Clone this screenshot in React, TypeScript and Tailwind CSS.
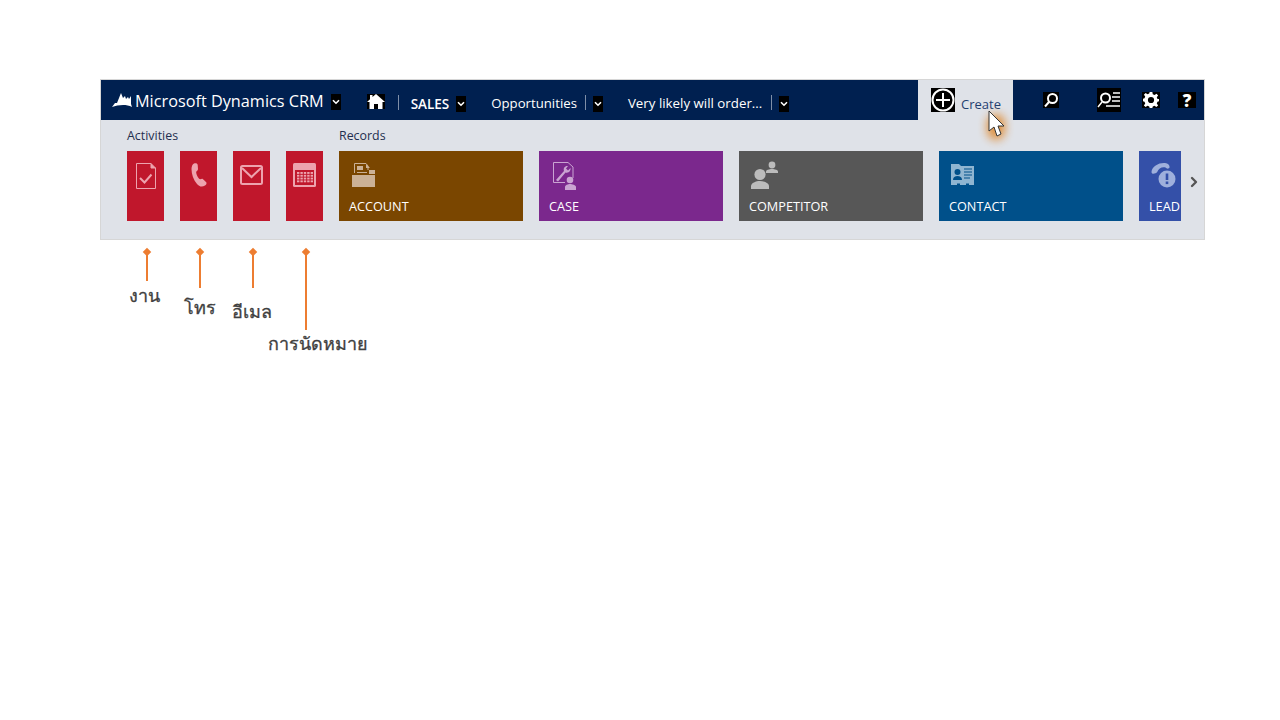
import React from 'react';
import { ChevronRight } from 'lucide-react';

const FONT = { fontFamily: '"Open Sans", "Noto Sans", sans-serif' };

function NavChevron() {
  return (
    <span className="flex h-4 w-2.5 shrink-0 items-center justify-center bg-black">
      <svg width="8" height="6" viewBox="0 0 8 6" fill="none" stroke="white" strokeWidth="1.6">
        <path d="M1 1.2 L4 4.2 L7 1.2" />
      </svg>
    </span>
  );
}

function NavSep() {
  return <span className="block h-[15px] w-px bg-[#7f8fa8]" />;
}

function TaskIcon() {
  return (
    <svg width="20" height="26" viewBox="0 0 20 26" fill="none" stroke="#eda3ae" strokeWidth="1">
      <path d="M.5.5 H15 L19.5 5 V25.5 H.5 Z" />
      <path d="M15 .5 V5 H19.5" fill="#eda3ae" />
      <path d="M4 15 L8.5 19.5 L15.5 11.5" strokeWidth="2" />
    </svg>
  );
}

function PhoneIcon() {
  return (
    <svg width="16" height="24" viewBox="0 0 16 24" fill="#eda3ae">
      <path d="M3 .5 C5 -.2 6.5 .5 6.7 2 L7 6 C7 7.5 5.5 8 5.2 9 C5 10.5 7 15 8.5 16 C9.5 16.5 10.5 15.5 11.5 15.8 L15 19 C16 20 15.5 21.5 14 22.5 C11 24.5 8 23.5 6 21 C2.5 17 .5 11.5 .5 6 C.5 3.5 1.5 1.2 3 .5 Z" />
    </svg>
  );
}

function MailIcon() {
  return (
    <svg className="mt-[2px]" width="23" height="20" viewBox="0 0 23 20" fill="none" stroke="#eda3ae">
      <rect x="1" y="1" width="21" height="18" rx="1.5" strokeWidth="2" />
      <path d="M2 3 L11.5 12 L21 3" strokeWidth="2" />
    </svg>
  );
}

function CalendarIcon() {
  const cells = [];
  for (let r = 0; r < 4; r++) {
    for (let c = 0; c < 5; c++) {
      cells.push(<rect key={`${r}-${c}`} x={4 + c * 3.4} y={9 + r * 2.8} width="2.4" height="1.9" fill="#eda3ae" />);
    }
  }
  return (
    <svg width="23" height="24" viewBox="0 0 23 24">
      <rect width="23" height="24" rx="1.5" fill="#eda3ae" />
      <rect x="2" y="7" width="19" height="15" fill="#c0172c" />
      {cells}
    </svg>
  );
}

function AccountIcon() {
  return (
    <svg className="ml-px mt-px" width="23" height="24" viewBox="0 0 23 24" fill="#cbb196">
      <path d="M2.5 10 V.5 H14 L16 3 V7" fill="none" stroke="#cbb196" />
      <path d="M5 3 H11 V7 H5 Z M5 9 H15 V10 H5 Z" />
      <path d="M14 1 L18 5 H14 Z M17 7 H23 V11 H17 Z" />
      <rect y="12" width="23" height="12" />
    </svg>
  );
}

function CaseIcon() {
  return (
    <svg className="ml-[2px]" width="24" height="28" viewBox="0 0 24 28" fill="#caa4d2">
      <path d="M.5 .5 H15 L20 5 V16 M.5 .5 V20.5 H12" fill="none" stroke="#caa4d2" />
      <path d="M3 18 L11 9 C10 6 12 3.5 15 4 L13 6.5 L15 8.5 L17.5 6 C18 9 15.5 11.5 12.5 10.5 L5 19.5 Z" />
      <circle cx="17" cy="18" r="3.3" />
      <path d="M12 28 V25 C12 23 15 22 17 22 C19 22 23 23 23 25 V28 Z" />
    </svg>
  );
}

function CompetitorIcon() {
  return (
    <svg className="-mt-px" width="27" height="28" viewBox="0 0 27 28" fill="#bcbcbc">
      <circle cx="9" cy="13.5" r="5.6" />
      <path d="M0 28 V25 C0 22 5 20 9 20 C13 20 18 22 18 25 V28 Z" />
      <circle cx="21" cy="4" r="3.4" />
      <path d="M15 12 V10.5 C15 9 18 8 21 8 C24 8 27 9 27 10.5 V12 Z" />
    </svg>
  );
}

function ContactIcon() {
  return (
    <svg className="mt-[2px]" width="23" height="21" viewBox="0 0 23 21">
      <path d="M0 0 H8 L10 2 H23 V21 H18 V19.5 H15 V21 H9 V19.5 H6 V21 H0 Z" fill="#8fb5d1" />
      <circle cx="6.5" cy="8" r="3" fill="#00508a" />
      <path d="M2 16 C2 13 4 12 6.5 12 C9 12 11 13 11 16 Z" fill="#00508a" />
      <path d="M13 5 H21 M13 8 H21 M13 11 H21 M13 14 H19" stroke="#00508a" strokeWidth="1.2" />
    </svg>
  );
}

function LeadIcon() {
  return (
    <svg className="shrink-0" width="30" height="26" viewBox="0 0 30 26">
      <path d="M.5 10 C1 4 8 .5 14 1 C17 1.3 19 3.5 18.5 5.5 C18 7 15.5 7 14.5 5.5 C11 4.5 7.5 6.5 6.2 10 C5 11.5 .5 13 .5 10 Z" fill="#9fb0dc" />
      <circle cx="16" cy="17" r="8.5" fill="#9fb0dc" />
      <rect x="14.7" y="11.5" width="2.6" height="6.5" fill="#3450a8" />
      <rect x="14.7" y="19.5" width="2.6" height="2.6" fill="#3450a8" />
    </svg>
  );
}

function RecordTile({ label, bg, icon, width = 'w-[184px]' }: { label: string; bg: string; icon: React.ReactNode; width?: string }) {
  return (
    <div className={`flex h-[70px] shrink-0 flex-col overflow-hidden ${width} ${bg}`}>
      <div className="flex h-[47px] items-start pl-[12px] pt-[11px]">{icon}</div>
      <span className="pl-[10px] text-[12.7px] leading-[17px] text-white">{label}</span>
    </div>
  );
}

function ActivityTile({ icon }: { icon: React.ReactNode }) {
  return <div className="flex h-[70px] w-[37px] items-start justify-center bg-[#c0172c] pt-[12px]">{icon}</div>;
}

function Annotation({ x, lineEnd, label, labelX, labelY }: { x: string; lineEnd: string; label: string; labelX: string; labelY: string }) {
  return (
    <>
      <span className={`absolute top-[249px] h-[6px] w-[6px] rotate-45 bg-[#ed7d31] ${x}`} />
      <span className={`absolute top-[252px] w-[2px] bg-[#ed7d31] ${lineEnd}`} />
      <span className={`absolute whitespace-nowrap text-[18px] leading-[24px] text-[#404040] [-webkit-text-stroke:0.3px_#404040] ${labelX} ${labelY}`}>{label}</span>
    </>
  );
}

export default function App() {
  return (
    <div className="relative h-[720px] w-[1280px] overflow-hidden bg-white pl-[100px] pt-[79px]" style={FONT}>
      <div className="h-[161px] w-[1105px] border border-[#d6d6d6] bg-[#dfe2e8]">
        <nav className="flex h-10 items-stretch bg-[#002050] pr-[8px] text-white">
          <div className="flex items-center pl-[11px]">
            <svg className="-mt-px" width="20" height="14" viewBox="0 0 20 14" fill="white">
              <path d="M0 14 L3 10 L5 10 L9 0 L11 5 L13 3 L14 6 L16 4 L17 6 L19 3 V11 L20 14 C14 11 6 12 0 14 Z" />
            </svg>
            <span className="ml-[3px] mt-[3px] text-[16.25px] leading-none">Microsoft Dynamics CRM</span>
            <span className="ml-[7px] mt-[4px]"><NavChevron /></span>
          </div>
          <div className="ml-[26px] flex items-center pt-[2px]">
            <span className="flex h-[15px] w-[18px] items-center justify-center bg-black">
              <svg width="18" height="15" viewBox="0 0 18 15" fill="white">
                <path d="M9 0 L18 8 H15.5 V15 H11 V10 H7 V15 H2.5 V8 H0 L3 5.3 V1 H5.5 V3 Z" />
              </svg>
            </span>
            <span className="ml-[13px] mt-[3px]"><NavSep /></span>
            <span className="ml-[12px] mt-[6px] text-[13.5px] font-semibold">SALES</span>
            <span className="ml-[7px] mt-[6px]"><NavChevron /></span>
            <span className="ml-[25px] mt-[6px] text-[13.2px]">Opportunities</span>
            <span className="ml-[8px] mt-[3px]"><NavSep /></span>
            <span className="ml-[7px] mt-[6px]"><NavChevron /></span>
            <span className="ml-[25px] mt-[6px] text-[13.3px]">Very likely will order...</span>
            <span className="ml-[9px] mt-[3px]"><NavSep /></span>
            <span className="ml-[7px] mt-[6px]"><NavChevron /></span>
          </div>
          <div className="ml-auto flex items-stretch">
            <div className="flex w-[95px] items-center gap-[6px] bg-[#dfe2e8] pl-[13px]">
              <span className="flex h-6 w-6 items-center justify-center bg-black">
                <svg width="24" height="24" viewBox="0 0 24 24" fill="none" stroke="white" strokeWidth="2">
                  <circle cx="12" cy="12" r="10.5" />
                  <path d="M12 5 V19 M5 12 H19" />
                </svg>
              </span>
              <span className="mt-[9px] text-[13px] text-[#1f3f70]">Create</span>
            </div>
            <div className="flex items-center">
              <span className="ml-[30px] flex h-4 w-4 items-center justify-center bg-black">
                <svg width="16" height="16" viewBox="0 0 16 16" fill="none" stroke="white" strokeWidth="2">
                  <circle cx="9.5" cy="6.5" r="4.5" />
                  <path d="M6 10 L2 14.5" />
                </svg>
              </span>
              <span className="ml-[38px] flex h-6 w-6 items-center justify-center bg-black">
                <svg width="24" height="24" viewBox="0 0 24 24" fill="none" stroke="white" strokeWidth="2">
                  <circle cx="8.5" cy="10" r="4.5" />
                  <path d="M5 14 L1 19 M16 5 H23 M15 9 H23 M15 13 H23 M9 18 H23" strokeWidth="1.5" />
                </svg>
              </span>
              <span className="ml-[21px] flex h-4 w-[18px] items-center justify-center bg-black">
                <svg width="16" height="16" viewBox="0 0 18 18" fill="white">
                  <path fillRule="evenodd" d="M7.5 0 H10.5 L11 2.6 L13 3.4 L15.2 1.9 L17 3.8 L15.5 6 L16.3 7.8 L18 8 V10.5 L16.3 11 L15.5 13 L17 15.2 L15 17 L13 15.5 L11 16.3 L10.5 18 H7.5 L7 16.3 L5 15.5 L3 17 L1 15.2 L2.5 13 L1.7 11 L0 10.5 V7.5 L1.7 7 L2.5 5 L1 3 L3 1.2 L5 2.6 L7 1.8 Z M9 5.5 A3.5 3.5 0 1 0 9 12.5 A3.5 3.5 0 1 0 9 5.5 Z" />
                </svg>
              </span>
              <span className="ml-[18px] flex h-4 w-[18px] items-center justify-center bg-black text-[17px] font-extrabold leading-none text-white">?</span>
            </div>
          </div>
        </nav>
        <div className="flex pl-[26px] pt-[7px]">
          <section className="shrink-0">
            <h3 className="text-[12.4px] leading-[17px] text-[#1f2f4f]">Activities</h3>
            <div className="mt-[7px] flex gap-4">
              <ActivityTile icon={<TaskIcon />} />
              <ActivityTile icon={<PhoneIcon />} />
              <ActivityTile icon={<MailIcon />} />
              <ActivityTile icon={<CalendarIcon />} />
            </div>
          </section>
          <section className="ml-4">
            <h3 className="text-[12.4px] leading-[17px] text-[#1f2f4f]">Records</h3>
            <div className="mt-[7px] flex items-center gap-4">
              <RecordTile label="ACCOUNT" bg="bg-[#7a4600]" icon={<AccountIcon />} />
              <RecordTile label="CASE" bg="bg-[#7b288d]" icon={<CaseIcon />} />
              <RecordTile label="COMPETITOR" bg="bg-[#575757]" icon={<CompetitorIcon />} />
              <RecordTile label="CONTACT" bg="bg-[#00508a]" icon={<ContactIcon />} />
              <RecordTile label="LEAD" width="w-[42px]" bg="bg-[#3450a8]" icon={<LeadIcon />} />
              <ChevronRight size={16} strokeWidth={3.5} className="-ml-[11px] -mt-[8px] text-[#555555]" />
            </div>
          </section>
        </div>
      </div>

      {/* cursor with orange glow */}
      <div className="absolute left-[988px] top-[110px] h-[28px] w-[18px]">
        <span className="absolute -left-[1px] top-[4px] h-[26px] w-[18px] rounded-full bg-[#e08a30] opacity-90 blur-[5px]" />
        <svg className="absolute left-0 top-0" width="18" height="28" viewBox="0 0 18 28">
          <path d="M1 1 L1 21 L6 17 L9 26 L13 24 L10 16 L16 16 Z" fill="white" stroke="#333" strokeWidth="1" />
        </svg>
      </div>

      <Annotation x="left-[144px]" lineEnd="left-[146px] h-[29px]" label="งาน" labelX="left-[129px]" labelY="top-[283px]" />
      <Annotation x="left-[197px]" lineEnd="left-[199px] h-[36px]" label="โทร" labelX="left-[184px]" labelY="top-[295px]" />
      <Annotation x="left-[250px]" lineEnd="left-[252px] h-[36px]" label="อีเมล" labelX="left-[232px]" labelY="top-[299px]" />
      <Annotation x="left-[303px]" lineEnd="left-[305px] h-[78px]" label="การนัดหมาย" labelX="left-[268px]" labelY="top-[331px]" />
    </div>
  );
}
